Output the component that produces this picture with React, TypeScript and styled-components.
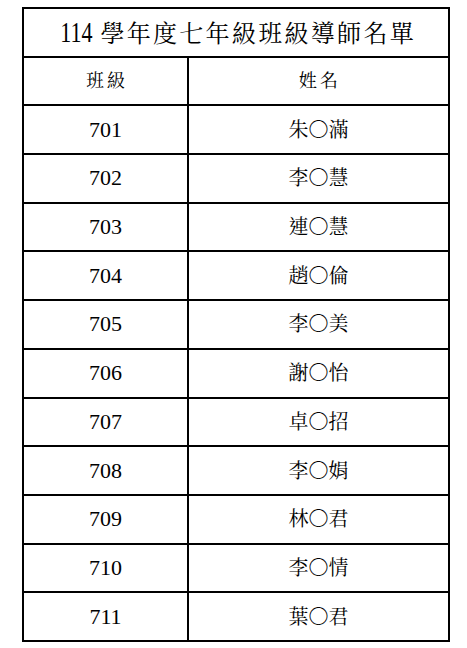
import styled, { createGlobalStyle } from 'styled-components'

// 導師名單資料
type Mentor = {
  cls: string
  name: string
}

const mentors: Mentor[] = [
  { cls: '701', name: '朱〇滿' },
  { cls: '702', name: '李〇慧' },
  { cls: '703', name: '連〇慧' },
  { cls: '704', name: '趙〇倫' },
  { cls: '705', name: '李〇美' },
  { cls: '706', name: '謝〇怡' },
  { cls: '707', name: '卓〇招' },
  { cls: '708', name: '李〇娟' },
  { cls: '709', name: '林〇君' },
  { cls: '710', name: '李〇情' },
  { cls: '711', name: '葉〇君' },
]

const GlobalStyle = createGlobalStyle`
  html, body {
    margin: 0;
    padding: 0;
    background: #ffffff;
  }
  body {
    font-family: "Liberation Serif", "Noto Serif CJK TC", "Noto Sans CJK TC", serif;
    color: #000;
  }
`

const App = () => {
  return (
    <>
      <GlobalStyle />
      <Page>
        <Table>
          <colgroup>
            <Col $width="165px" />
            <Col />
          </colgroup>
          <tbody>
            <Row>
              <TitleCell colSpan={2}>
                <Year>114</Year>
                <span>學年度七年級班級導師名單</span>
              </TitleCell>
            </Row>
            <Row>
              <HeadCell>班級</HeadCell>
              <HeadCell>姓名</HeadCell>
            </Row>
            {mentors.map((m) => (
              <Row key={m.cls}>
                <ClassCell>{m.cls}</ClassCell>
                <NameCell>{m.name}</NameCell>
              </Row>
            ))}
          </tbody>
        </Table>
      </Page>
    </>
  )
}

// UI 元件樣式
const Page = styled.div`
  padding: 7px 0 0 22px;
`

const Table = styled.table`
  width: 428px;
  border-collapse: collapse;
  table-layout: fixed;
  border: 2px solid #000;
`

const Col = styled.col<{ $width?: string }>`
  width: ${(p) => p.$width ?? 'auto'};
`

const Row = styled.tr`
  height: 48.7px;
`

const Cell = styled.td`
  border: 2px solid #000;
  padding: 0;
  text-align: center;
  vertical-align: middle;
  line-height: 1;
`

const TitleCell = styled(Cell)`
  font-size: 24px;
  letter-spacing: 2.3px;
  padding-top: 1px;
`

const Year = styled.span`
  display: inline-block;
  font-size: 29px;
  letter-spacing: 0;
  margin-right: 8px;
  margin-left: -6px;
  transform: scaleX(0.76);
  transform-origin: right center;
`

const HeadCell = styled(Cell)`
  font-size: 18px;
  letter-spacing: 3px;
  text-indent: 3px;
`

const ClassCell = styled(Cell)`
  font-size: 22px;
`

const NameCell = styled(Cell)`
  font-size: 20px;
`

export default App
